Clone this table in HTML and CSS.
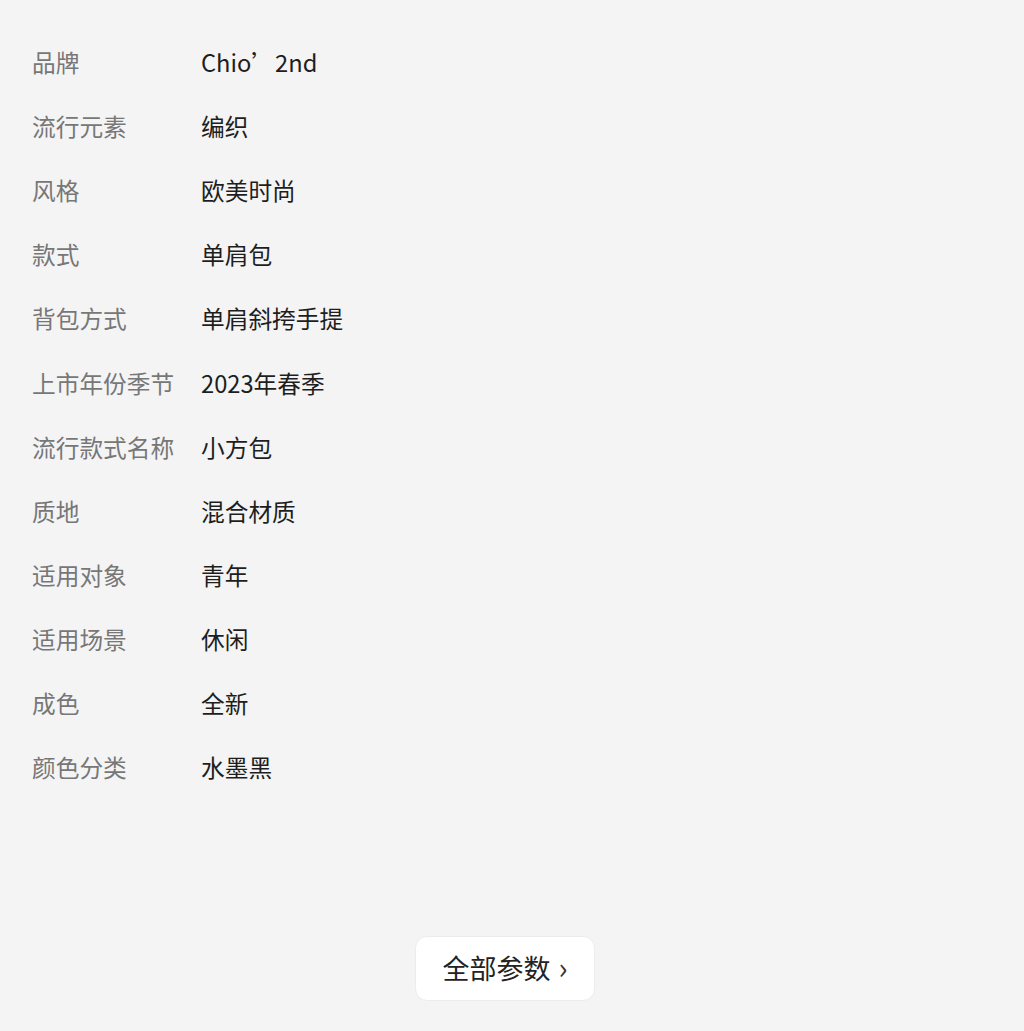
FILE: index.html
```html
<!DOCTYPE html>
<html>
<head>
    <meta charset="utf-8">
    <title>商品参数</title>
    <link rel="stylesheet" href="styles.css">
</head>
<body>
    <div id="params">
        <dl class="list">
            <div class="row"><dt>品牌</dt><dd>Chio’2nd</dd></div>
            <div class="row"><dt>流行元素</dt><dd>编织</dd></div>
            <div class="row"><dt>风格</dt><dd>欧美时尚</dd></div>
            <div class="row"><dt>款式</dt><dd>单肩包</dd></div>
            <div class="row"><dt>背包方式</dt><dd>单肩斜挎手提</dd></div>
            <div class="row"><dt>上市年份季节</dt><dd>2023年春季</dd></div>
            <div class="row"><dt>流行款式名称</dt><dd>小方包</dd></div>
            <div class="row"><dt>质地</dt><dd>混合材质</dd></div>
            <div class="row"><dt>适用对象</dt><dd>青年</dd></div>
            <div class="row"><dt>适用场景</dt><dd>休闲</dd></div>
            <div class="row"><dt>成色</dt><dd>全新</dd></div>
            <div class="row"><dt>颜色分类</dt><dd>水墨黑</dd></div>
        </dl>
        <footer>
            <button class="more">全部参数<span class="arrow">›</span></button>
        </footer>
    </div>
</body>
</html>
```

FILE: styles.css
```css
html, body, dl, dt, dd {
    margin: 0;
    padding: 0;
}

body {
    background: #f4f4f4;
    font-family: "Noto Sans CJK SC", "Noto Sans", sans-serif;
}

#params {
    display: flex;
    flex-direction: column;
    height: 1031px;
    box-sizing: border-box;
    padding: 30px 32px 30px;
}

.list {
    display: flex;
    flex-direction: column;
}

.row {
    display: grid;
    grid-template-columns: 169px 1fr;
    height: 64.1px;
    align-items: center;
    font-size: 23.7px;
}

dt {
    color: #777;
}

dd {
    color: #1e1e1e;
}

footer {
    margin-top: auto;
    display: flex;
    justify-content: center;
    padding-right: 14px;
}

.more {
    display: flex;
    align-items: center;
    gap: 8px;
    width: 180px;
    height: 65px;
    justify-content: center;
    background: #fff;
    border: 1px solid #ececec;
    border-radius: 12px;
    font-family: inherit;
    font-size: 27px;
    color: #222;
    padding: 0 0 2px;
}

.arrow {
    font-size: 30px;
    color: #333;
    line-height: 1;
    padding-bottom: 3px;
}
```
